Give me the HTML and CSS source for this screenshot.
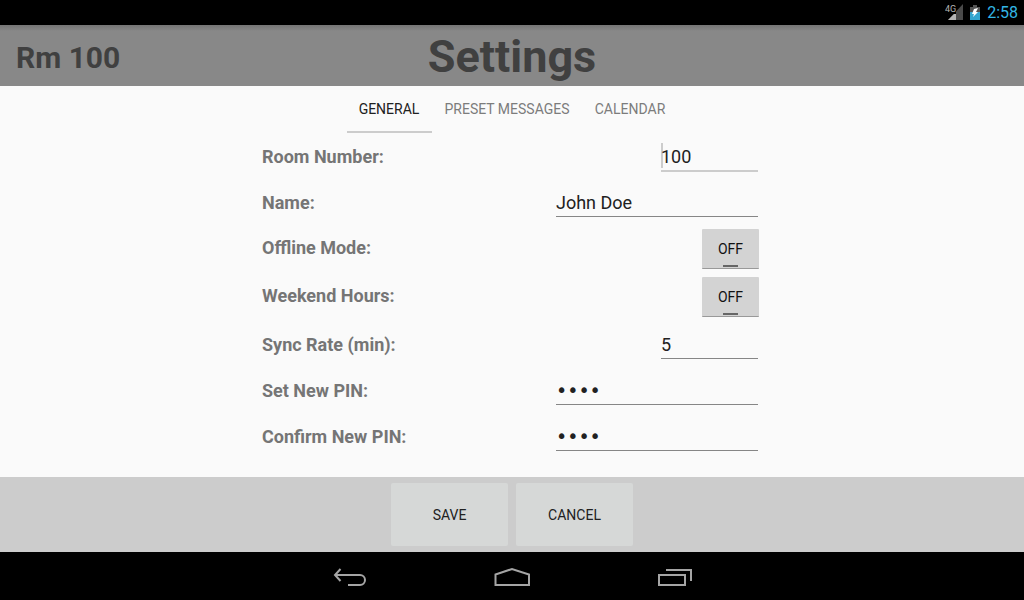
FILE: index.html
```html
<!DOCTYPE html>
<html lang="en">
<head>
<meta charset="utf-8">
<meta name="viewport" content="width=device-width, initial-scale=1">
<title>Settings</title>
<link rel="stylesheet" href="styles.css">
</head>
<body>
<div class="status-bar">
  <svg class="signal" width="19" height="17" viewBox="0 0 19 17" aria-hidden="true">
    <path d="M18 0V16H3Z" fill="#4a4a4a"/>
    <path d="M11 8V16H3Z" fill="#b4b4b4"/>
    <rect width="11" height="10" fill="#000"/>
    <text class="network" x="0" y="8">4G</text>
  </svg>
  <svg class="battery" width="10" height="16" viewBox="0 0 10 16" aria-hidden="true">
    <path d="M3 0H7V2H10V8H0V2H3Z" fill="#555"/>
    <path d="M0 7H10V15H0Z" fill="#33a5cf"/>
    <path d="M4 4L8 3L6 7L8 7L3 12L4 9L2 9Z" fill="#fff"/>
  </svg>
  <time class="clock">2:58</time>
</div>
<header class="header">
  <span class="room">Rm 100</span>
  <h1 class="title">Settings</h1>
</header>
<main class="content">
  <nav class="tabs">
    <button class="tab tab-active" type="button">GENERAL</button>
    <button class="tab" type="button">PRESET MESSAGES</button>
    <button class="tab" type="button">CALENDAR</button>
  </nav>
  <form class="form" id="settings">
    <div class="row"><label class="label" for="room">Room Number:</label><input class="field field-short field-active" id="room" type="text" value="100"></div>
    <div class="row"><label class="label" for="name">Name:</label><input class="field" id="name" type="text" value="John Doe"></div>
    <div class="row row-toggle"><span class="label" id="offline">Offline Mode:</span><button class="toggle" type="button" aria-pressed="false" aria-labelledby="offline">OFF</button></div>
    <div class="row row-toggle"><span class="label" id="weekend">Weekend Hours:</span><button class="toggle" type="button" aria-pressed="false" aria-labelledby="weekend">OFF</button></div>
    <div class="row"><label class="label" for="sync">Sync Rate (min):</label><input class="field field-short" id="sync" type="text" value="5"></div>
    <div class="row"><label class="label" for="pin">Set New PIN:</label><input class="field field-pin" id="pin" type="password" value="0000"></div>
    <div class="row"><label class="label" for="confirm">Confirm New PIN:</label><input class="field field-pin" id="confirm" type="password" value="0000"></div>
  </form>
</main>
<footer class="actions">
  <button class="action" type="submit" form="settings">SAVE</button>
  <button class="action" type="button">CANCEL</button>
</footer>
<nav class="nav-bar">
  <button class="nav-button" type="button" aria-label="Back">
    <svg width="36" height="24" viewBox="0 0 36 24"><path d="M3 11H28A5 5 0 0 1 28 21H16M8.500 5L3 11L8.500 17"/></svg>
  </button>
  <button class="nav-button" type="button" aria-label="Home">
    <svg width="36" height="24" viewBox="0 0 36 24"><path d="M1.500 21V10.500L18 5L35 10.500V21Z"/></svg>
  </button>
  <button class="nav-button" type="button" aria-label="Recent apps">
    <svg width="36" height="24" viewBox="0 0 36 24"><path d="M3 11H29V21H3ZM10 6H35V17"/></svg>
  </button>
</nav>
</body>
</html>
```
FILE: styles.css
```css
* { box-sizing: border-box; }
body {
  margin: 0;
  min-height: 100vh;
  display: flex;
  flex-direction: column;
  background: #fafafa;
  color: #212121;
  font-family: Roboto, sans-serif;
}
button, input { font-family: inherit; color: inherit; outline: none; }
button { border: 0; padding: 0; background: none; }
.status-bar {
  height: 25px;
  padding-right: 6px;
  display: flex;
  justify-content: flex-end;
  align-items: center;
  background: #000;
}
.signal { margin-right: 6px; }
.battery { margin-right: 7px; }
.network { font-size: 9px; fill: #b4b4b4; }
.clock { font-size: 16px; color: #33b5e5; }
.header {
  height: 61px;
  padding: 3px 16px 0;
  display: grid;
  grid-template-columns: 1fr auto 1fr;
  align-items: center;
  background: linear-gradient(#757575, #888 6px);
  color: #404040;
  font-weight: bold;
}
.room { font-size: 30px; }
.title { margin: 0; font-size: 45px; line-height: 58px; }
.content { flex: 1; display: flex; flex-direction: column; align-items: center; }
.tabs { height: 48px; display: grid; grid-template-columns: 85px 151px 95px; }
.tab {
  height: 47px;
  border-bottom: 2px solid transparent;
  font-size: 14px;
  color: #7c7c7c;
}
.tab-active { color: #212121; border-bottom-color: #ccc; }
.form { width: 100%; max-width: 500px; padding-right: 4px; }
.row { height: 46px; display: flex; justify-content: space-between; align-items: center; }
.row-toggle { height: 48px; align-items: baseline; padding-top: 3px; }
.label { padding-bottom: 2px; font-size: 18px; font-weight: bold; color: #757575; }
.field {
  width: 202px;
  height: 28px;
  padding: 0 0 2px;
  border: 0;
  background: linear-gradient(#868686, #868686) left bottom / 100% 1px no-repeat;
  font-size: 18px;
}
.field-short { width: 97px; }
.field-active {
  height: 30px;
  background:
    linear-gradient(#ccc, #ccc) left 1px / 2px 25px no-repeat,
    linear-gradient(#ccc, #ccc) left bottom / 100% 2px no-repeat;
}
.field-pin { font-family: "DejaVu Sans", sans-serif; font-size: 19px; }
.toggle {
  width: 57px;
  height: 40px;
  margin-right: -1px;
  border-bottom: 1px solid #999;
  border-radius: 1px;
  background: linear-gradient(#666, #666) center 36px / 15px 2px no-repeat, #d3d3d3;
  font-size: 14px;
  color: #111;
}
.actions {
  height: 75px;
  padding: 6px;
  display: flex;
  justify-content: center;
  gap: 8px;
  background: #ccc;
}
.action {
  width: 117px;
  border-radius: 2px;
  background: #d6d8d7;
  font-size: 14px;
}
.nav-bar {
  height: 48px;
  display: flex;
  justify-content: center;
  align-items: center;
  background: #000;
}
.nav-button { width: 162px; height: 48px; display: grid; place-items: center; }
.nav-button svg { fill: none; stroke: #a5a5a5; stroke-width: 2; }
```
